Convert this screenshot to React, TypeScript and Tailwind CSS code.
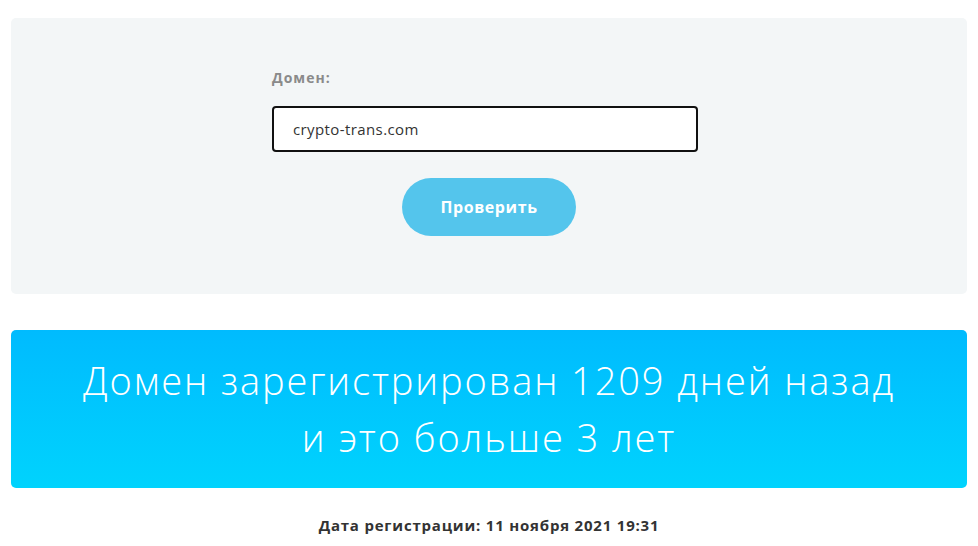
import React from "react";

const font = { fontFamily: "'Open Sans', 'Noto Sans', sans-serif" };

export default function App() {
  return (
    <div className="min-h-[546px] bg-white px-[11px] pt-[18px]" style={font}>
      <div className="flex flex-col items-center rounded-[5px] bg-[#f3f6f7] pb-[58px] pt-[50px]">
        <div className="w-[434px]">
          <label className="mb-[18px] block text-[14px] leading-[20px] font-bold tracking-[1px] text-[#8a8a8a]">
            Домен:
          </label>
          <input
            type="text"
            defaultValue="crypto-trans.com"
            className="h-[46px] w-[426px] rounded-[4px] border-2 border-[#111] bg-white px-[19px] text-[15px] tracking-[0.4px] text-[#333] outline-none"
          />
        </div>
        <button className="mt-[26px] h-[58px] w-[174px] rounded-full bg-[#54c5ec] text-[16px] font-bold tracking-[0.6px] text-white">
          Проверить
        </button>
      </div>

      <div className="mt-[36px] rounded-[5px] bg-linear-to-b from-[#00bbfe] to-[#00d3fd] py-[22px] text-center text-[38px] leading-[57px] font-light tracking-[1.9px] text-white">
        Домен зарегистрирован 1209 дней назад
        <br />
        и это больше 3 лет
      </div>

      <div className="mt-[26px] text-center text-[15px] leading-[22px] font-bold tracking-[0.8px] text-[#333]">
        Дата регистрации: 11 ноября 2021 19:31
      </div>
    </div>
  );
}
